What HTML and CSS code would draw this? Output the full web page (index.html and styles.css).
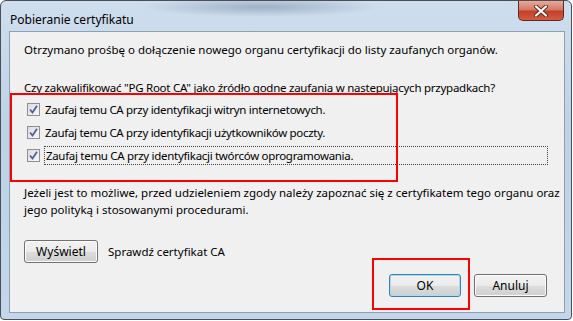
FILE: index.html
```html
<!DOCTYPE html>
<html lang="pl">
<head>
  <meta charset="UTF-8">
  <title>Pobieranie certyfikatu</title>
  <link rel="stylesheet" href="styles.css">
</head>
<body>

<div class="window">
  <div class="titlebar">
    <span class="title">Pobieranie certyfikatu</span>
    <div class="close">
      <svg width="16" height="12" viewBox="0 0 16 12">
        <path d="M3 1.5 L13 10.5 M13 1.5 L3 10.5" stroke="#5a2a22" stroke-width="4" stroke-linecap="round"/>
        <path d="M3 1.5 L13 10.5 M13 1.5 L3 10.5" stroke="#fff" stroke-width="2.2" stroke-linecap="round"/>
      </svg>
    </div>
  </div>

  <div class="panel">
    <p class="msg">Otrzymano prośbę o dołączenie nowego organu certyfikacji do listy zaufanych organów.</p>
    <p class="question">Czy zakwalifikować "PG Root CA" jako źródło godne zaufania w nastepujących przypadkach?</p>

    <div class="options">
      <label class="opt"><span class="cb"><svg width="9" height="9" viewBox="0 0 9 9"><path d="M1 4.5 L3.5 7.5 L8 0.8" fill="none" stroke="#4b61a0" stroke-width="1.8"/></svg></span>Zaufaj temu CA przy identyfikacji witryn internetowych.</label>
      <label class="opt"><span class="cb"><svg width="9" height="9" viewBox="0 0 9 9"><path d="M1 4.5 L3.5 7.5 L8 0.8" fill="none" stroke="#4b61a0" stroke-width="1.8"/></svg></span>Zaufaj temu CA przy identyfikacji użytkowników poczty.</label>
      <label class="opt"><span class="cb"><svg width="9" height="9" viewBox="0 0 9 9"><path d="M1 4.5 L3.5 7.5 L8 0.8" fill="none" stroke="#4b61a0" stroke-width="1.8"/></svg></span><span class="focus">Zaufaj temu CA przy identyfikacji twórców oprogramowania.</span></label>
    </div>

    <p class="note">Jeżeli jest to możliwe, przed udzieleniem zgody należy zapoznać się z certyfikatem tego organu oraz<br>jego polityką i stosowanymi procedurami.</p>

    <div class="view-row">
      <button class="btn btn-view">Wyświetl</button>
      <span>Sprawdź certyfikat CA</span>
    </div>

    <div class="actions">
      <button class="btn btn-default">OK</button>
      <button class="btn">Anuluj</button>
    </div>
  </div>

  <div class="mark mark-options"></div>
  <div class="mark mark-ok"></div>
</div>

</body>
</html>
```

FILE: styles.css
```css
body { margin: 0; background: #fff; font-family: "Noto Sans", "Open Sans", sans-serif; font-size: 11.5px; color: #000; }

.window {
  position: relative;
  width: 572px; height: 320px;
  border: 1px solid #4a4f57; border-radius: 6px 6px 4px 4px;
  background:
    radial-gradient(ellipse 120px 10px at 260px 6px, rgba(120,140,165,0.55), rgba(120,140,165,0) 100%),
    linear-gradient(#cfdeee, #bdd2e7 40%, #c4d7ea);
  display: flex; flex-direction: column;
  padding: 0 6px 6px 8px; box-sizing: border-box;
}

.titlebar { height: 30px; display: flex; align-items: flex-start; justify-content: space-between; flex-shrink: 0; }
.title { margin: 11px 0 0 1px; line-height: 15px; font-size: 12px; color: #000; }
.close {
  width: 44px; height: 19px; margin-right: 1px;
  border: 1px solid #5c2a22; border-top: none; border-radius: 0 0 5px 5px;
  background: linear-gradient(#e9a99a, #d47a66 45%, #c2412a 55%, #d65a3f);
  display: flex; align-items: center; justify-content: center;
}

.panel {
  flex: 1;
  background: #f0f0f0; border: 1px solid #8e9fb3;
  padding: 10px 17px 15px 14px;
  display: flex; flex-direction: column;
}

p { margin: 0; line-height: 15px; white-space: nowrap; }
.question { margin-top: 23px; letter-spacing: -0.25px; }

.options { margin-top: 3px; }
.opt { display: flex; align-items: center; height: 23px; padding-left: 3px; letter-spacing: -0.3px; }
.cb {
  width: 11px; height: 11px; margin-right: 5px;
  border: 1px solid #8f8f8f;
  background: linear-gradient(135deg, #dcdcdc, #f8f8f8);
  display: flex; align-items: center; justify-content: center;
}
.focus { outline: 1px dotted #444; padding: 1px 0 1px 1px; width: 504px; }

.note { margin-top: 17px; line-height: 17px; }

.view-row { display: flex; align-items: center; margin-top: 22px; gap: 10px; }

.btn {
  font-family: inherit; font-size: 12px; color: #000;
  height: 23px; padding: 0;
  border: 1px solid #707070; border-radius: 3px;
  background: linear-gradient(#f2f2f2, #ebebeb 50%, #dddddd 51%, #cfcfcf);
  box-shadow: inset 0 0 0 1px #fcfcfc;
}
.btn-view { width: 74px; }

.actions { margin-top: auto; display: flex; justify-content: flex-end; gap: 13px; }
.actions .btn { width: 73px; }
.actions .btn-default { width: 72px; border-color: #3c7fb1; box-shadow: inset 0 0 0 1px #a6dcf4; }

.mark { position: absolute; border: 2px solid #f00; }
.mark-options { left: 9px; top: 92px; width: 384px; height: 85px; }
.mark-ok { left: 371px; top: 257px; width: 94px; height: 48px; }
```
